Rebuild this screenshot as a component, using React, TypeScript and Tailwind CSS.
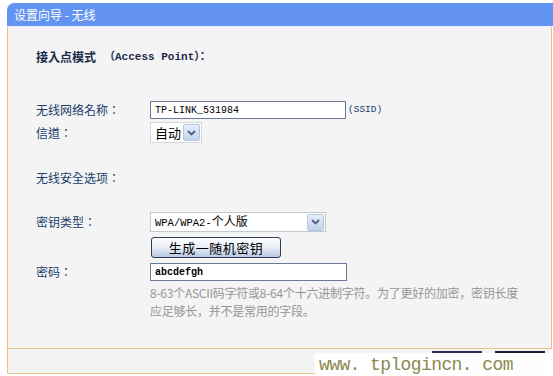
import React from "react";

const cjk = { fontFamily: '"Noto Sans CJK SC", "Noto Sans", sans-serif' };
const tc = { fontFamily: '"Noto Sans CJK TC", "Noto Sans", sans-serif' };
const mono = { fontFamily: '"Liberation Mono", "Noto Sans CJK SC", monospace' };

function Arrow() {
  return (
    <div className="w-[17px] h-[17px] border border-[#b8c6dc] bg-gradient-to-b from-[#e6eefb] to-[#c2d2ee] flex items-center justify-center rounded-[2px]">
      <svg width="9" height="6" viewBox="0 0 9 6">
        <path d="M1 1 L4.5 4.5 L8 1" stroke="#4d6185" strokeWidth="1.8" fill="none" />
      </svg>
    </div>
  );
}

function Label({ children }: { children: React.ReactNode }) {
  return (
    <div className="w-[114px] shrink-0 text-[12px] leading-[16px] text-[#213d6e]" style={tc}>
      {children}
    </div>
  );
}

export default function App() {
  return (
    <div className="w-[553px] h-[376px] bg-white relative overflow-hidden">
      <div className="ml-[7px] mt-[3px] w-[546px]">
        <div className="h-[23px] bg-[#6494f2] rounded-tl-[7px] flex items-center pl-[7px] text-white text-[12px]" style={cjk}>
          设置向导 - 无线
        </div>
        <div className="h-[1px] bg-[#e8eef8] w-[544px]" />
        <div className="w-[545px] h-[322px] bg-[#f4f4f4] border-l border-r border-b border-[#ebc18a] pl-[28px] flex flex-col">
          <div className="mt-[22px] h-[16px] flex items-center text-[12px] text-[#1c2a4c]" style={tc}>
            <span className="font-semibold">接入点模式</span>
            <span className="ml-[8px] text-[11px] font-bold" style={mono}>（Access Point）：</span>
          </div>
          <div className="mt-[36px] h-[18px] flex items-center">
            <Label>无线网络名称：</Label>
            <div className="w-[196px] h-[18px] bg-white border border-[#6c7a98] flex items-center pl-[4px] text-[10px] text-black" style={mono}>
              TP-LINK_531984
            </div>
            <span className="ml-[2px] text-[9.5px] text-[#213d6e]" style={mono}>(SSID)</span>
          </div>
          <div className="mt-[3px] h-[21px] flex items-center">
            <Label>信道：</Label>
            <div className="w-[52px] h-[21px] bg-white border border-[#d4d8de] flex items-center justify-between pl-[4px] pr-[1px] text-[13px] text-black" style={cjk}>
              <span>自动</span>
              <Arrow />
            </div>
          </div>
          <div className="mt-[27px] h-[16px] flex items-center">
            <Label>无线安全选项：</Label>
          </div>
          <div className="mt-[26px] h-[20px] flex items-center">
            <Label>密钥类型：</Label>
            <div className="w-[176px] h-[20px] bg-white border border-[#c4c8d0] flex items-center justify-between pl-[4px] pr-[1px] text-[12px] text-black" style={mono}>
              <span className="text-[10.5px]">WPA/WPA2-<span style={cjk} className="text-[12px]">个人版</span></span>
              <Arrow />
            </div>
          </div>
          <div className="mt-[5px] h-[21px] flex items-center">
            <div className="w-[115px] shrink-0" />
            <div className="w-[130px] h-[21px] border border-[#2d3a58] rounded-[3px] bg-gradient-to-b from-[#ffffff] via-[#e8edf6] to-[#b9c8e2] flex items-center justify-center text-[13px] text-black tracking-[0.5px]" style={cjk}>
              生成一随机密钥
            </div>
          </div>
          <div className="mt-[5px] h-[18px] flex items-center">
            <Label>密码：</Label>
            <div className="w-[197px] h-[18px] bg-white border border-[#6c7a98] flex items-center pl-[4px] text-[10px] font-bold text-black" style={mono}>
              abcdefgh
            </div>
          </div>
          <div className="mt-[3px] ml-[114px] w-[380px] text-[12px] leading-[18px] tracking-[-0.25px] text-[#969696]" style={cjk}>
            <div className="whitespace-nowrap">8-63个ASCII码字符或8-64个十六进制字符。为了更好的加密，密钥长度</div>
            <div className="whitespace-nowrap">应足够长，并不是常用的字段。</div>
          </div>
        </div>
        <div className="w-[543px] h-[25px] bg-[#f4f4f4] border-l border-b border-[#ebc18a] flex justify-end gap-[13px] pt-[2px] pr-[5px]">
          <div className="w-[50px] h-[21px] border-t-2 border-[#2a3050] bg-[#dde3ee]" />
          <div className="w-[50px] h-[21px] border-t-2 border-[#1a1e30] bg-[#dde3ee]" />
        </div>
      </div>
      <div className="absolute left-[315px] top-[353px] w-[238px] h-[23px] bg-white/95 flex items-center pl-[4px] text-[18px] tracking-[-0.6px] text-[#8a8a4e] leading-none" style={mono}>
        www. tplogincn. com
      </div>
    </div>
  );
}
